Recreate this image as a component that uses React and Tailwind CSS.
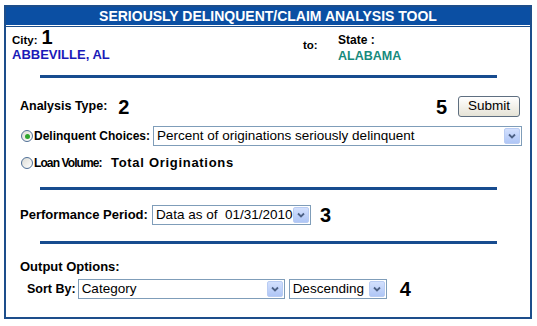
import React from "react";

function Arrow() {
  return (
    <div className="w-[16px] h-[16px] mr-px rounded-[2px] border border-[#b9ccf3] bg-gradient-to-b from-[#d3e0fd] to-[#afc6f6] flex items-center justify-center shrink-0">
      <svg width="8" height="6" viewBox="0 0 8 6">
        <path d="M1 1.5 L4 4.5 L7 1.5" fill="none" stroke="#4d6185" strokeWidth="1.8" />
      </svg>
    </div>
  );
}

function Select({ w, children }) {
  return (
    <div
      className={`${w} h-[20px] border border-[#7f9db9] bg-white flex items-center shrink-0`}
    >
      <div className="flex-1 pl-[3px] text-[13.5px] leading-[16px] text-black whitespace-nowrap overflow-hidden">
        {children}
      </div>
      <Arrow />
    </div>
  );
}

function Radio({ checked }) {
  return (
    <div className="w-[12px] h-[12px] rounded-full border border-[#4f6f96] bg-gradient-to-br from-[#dcdcd6] to-white flex items-center justify-center shrink-0">
      {checked && <div className="w-[5px] h-[5px] rounded-full bg-[#2ea52e]" />}
    </div>
  );
}

function Rule() {
  return <div className="ml-[34px] w-[457px] h-[3px] bg-[#174c8f]" />;
}

export default function App() {
  return (
    <div
      className="bg-white w-[537px] h-[326px] pt-[5px] pl-[4px]"
      style={{ fontFamily: '"Liberation Sans", Arial, sans-serif' }}
    >
      <div className="w-[528px] h-[314px] border-2 border-[#1d4e8b] bg-white flex flex-col">
        <div className="h-[18px] bg-[#0b4fa3] text-white font-bold text-[14px] leading-[18px] text-center">
          SERIOUSLY DELINQUENT/CLAIM ANALYSIS TOOL
        </div>
        <div className="h-px bg-white" />
        <div className="h-px bg-[#1d4e8b]" />

        {/* City / State */}
        <div className="h-[48px] flex">
          <div className="w-[297px] pl-[6px]">
            <div className="h-[20px] flex items-baseline">
              <span className="text-[11.5px] font-bold text-black">City:</span>
              <span className="text-[20px] leading-[20px] font-bold text-black ml-[4px]">1</span>
            </div>
            <div className="text-[13px] leading-[15px] font-bold text-[#1a1ab8]">ABBEVILLE, AL</div>
          </div>
          <div className="w-[35px] pt-[12px] text-[11.5px] leading-[13px] font-bold text-black">to:</div>
          <div className="pt-[7px]">
            <div className="text-[12px] leading-[13px] font-bold text-black">State :</div>
            <div className="mt-[2px] text-[12.5px] leading-[15px] font-bold text-[#168a7c]">ALABAMA</div>
          </div>
        </div>

        <Rule />

        {/* Analysis type */}
        <div className="mt-[18px] h-[21px] flex items-center pl-[14px] pr-[10px]">
          <span className="text-[12.5px] font-bold text-black">Analysis Type:</span>
          <span className="ml-[11px] text-[20px] leading-[20px] font-bold text-black">2</span>
          <div className="flex-1" />
          <span className="text-[20px] leading-[20px] font-bold text-black">5</span>
          <div className="ml-[11px] w-[62px] h-[21px] rounded-[3px] border border-[#5f6f80] bg-gradient-to-b from-white to-[#e6e3d6] flex items-center justify-center text-[13.5px] text-black">
            Submit
          </div>
        </div>

        <div className="mt-[9px] h-[20px] flex items-center pl-[15px]">
          <Radio checked />
          <span className="ml-px text-[12px] font-bold text-black">Delinquent Choices:</span>
          <div className="ml-[3px]">
            <Select w="w-[369px]">Percent of originations seriously delinquent</Select>
          </div>
        </div>

        <div className="mt-[7px] h-[20px] flex items-center pl-[15px]">
          <Radio />
          <span className="ml-px w-[77px] text-[12px] tracking-[-0.9px] font-bold text-black">Loan Volume:</span>
          <span className="text-[13px] tracking-[0.7px] font-bold text-black">Total Originations</span>
        </div>

        <div className="mt-[14px]">
          <Rule />
        </div>

        <div className="mt-[15px] h-[20px] flex items-center pl-[14px]">
          <span className="text-[13px] font-bold text-black">Performance Period:</span>
          <div className="ml-[4px]">
            <Select w="w-[159px]">Data as of&nbsp; 01/31/2010</Select>
          </div>
          <span className="ml-[9px] text-[20px] leading-[20px] font-bold text-black">3</span>
        </div>

        <div className="mt-[16px]">
          <Rule />
        </div>

        <div className="mt-[15px] h-[16px] flex items-center pl-[14px]">
          <span className="text-[13px] font-bold text-black">Output Options:</span>
        </div>

        <div className="mt-[4px] h-[20px] flex items-center pl-[21px]">
          <span className="text-[12.5px] font-bold text-black">Sort By:</span>
          <div className="ml-[2px]">
            <Select w="w-[207px]">Category</Select>
          </div>
          <div className="ml-[4px]">
            <Select w="w-[98px]">Descending</Select>
          </div>
          <span className="ml-[13px] text-[20px] leading-[20px] font-bold text-black">4</span>
        </div>
      </div>
    </div>
  );
}
